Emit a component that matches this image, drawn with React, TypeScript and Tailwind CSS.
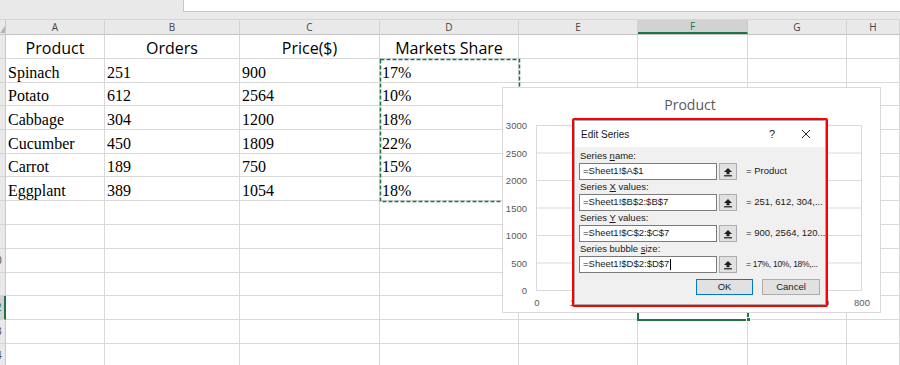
import React from 'react'

const colWidths = ['w-[99px]', 'w-[135px]', 'w-[140px]', 'w-[139px]', 'w-[119px]', 'w-[110px]', 'w-[99px]', 'flex-1']
const colLetters = ['A', 'B', 'C', 'D', 'E', 'F', 'G', 'H']
const rowHeights = [24, 24, 23, 24, 24, 23, 24, 24, 24, 24, 23, 24, 24, 23]

const data: string[][] = [
  ['Product', 'Orders', 'Price($)', 'Markets Share'],
  ['Spinach', '251', '900', '17%'],
  ['Potato', '612', '2564', '10%'],
  ['Cabbage', '304', '1200', '18%'],
  ['Cucumber', '450', '1809', '22%'],
  ['Carrot', '189', '750', '15%'],
  ['Eggplant', '389', '1054', '18%'],
]

const fields = [
  { pre: 'Series ', u: 'n', post: 'ame:', value: '=Sheet1!$A$1', preview: '= Product', tight: false },
  { pre: 'Series ', u: 'X', post: ' values:', value: '=Sheet1!$B$2:$B$7', preview: '= 251, 612, 304,...', tight: false },
  { pre: 'Series ', u: 'Y', post: ' values:', value: '=Sheet1!$C$2:$C$7', preview: '= 900, 2564, 120...', tight: false },
  { pre: 'Series bubble ', u: 's', post: 'ize:', value: '=Sheet1!$D$2:$D$7', preview: '= 17%, 10%, 18%,...', tight: true, cursor: true },
]

function UploadIcon() {
  return (
    <svg width="10" height="10" viewBox="0 0 10 10">
      <path d="M5 1 L9 5 H6.5 V7.2 H3.5 V5 H1 Z" fill="#1f1f1f" />
      <rect x="1" y="8.2" width="8" height="1.2" fill="#1f1f1f" />
    </svg>
  )
}

function Chart() {
  const yLabels = ['3000', '2500', '2000', '1500', '1000', '500', '0']
  const xLabels = ['0', '100', '200', '300', '400', '500', '600', '700', '800']
  return (
    <div className="absolute left-[502px] top-[87px] w-[379px] h-[226px] bg-white border border-[#d9d9d9] z-10">
      <svg width="377" height="224" className="block">
        <text x="187" y="22" textAnchor="middle" fontSize="14" fill="#595959" fontFamily="'Open Sans', sans-serif">
          Product
        </text>
        {yLabels.map((l, i) => (
          <g key={l}>
            <line x1="33" x2="358" y1={37.5 + i * 27.5} y2={37.5 + i * 27.5} stroke="#d9d9d9" strokeWidth="1" />
            <text x="24" y={41 + i * 27.5} textAnchor="end" fontSize="9.5" fill="#595959" fontFamily="'Liberation Sans', sans-serif">
              {l}
            </text>
          </g>
        ))}
        {xLabels.map((l, i) => (
          <g key={l}>
            <line x1={33.5 + i * 40.625} x2={33.5 + i * 40.625} y1="37.5" y2="202.5" stroke="#d9d9d9" strokeWidth="1" />
            <text x={34 + i * 40.625} y="218" textAnchor="middle" fontSize="9.5" fill="#595959" fontFamily="'Liberation Sans', sans-serif">
              {l}
            </text>
          </g>
        ))}
      </svg>
    </div>
  )
}

function EditSeriesDialog() {
  return (
    <div className="absolute left-[572px] top-[118px] w-[256px] h-[189px] border-2 border-[#ff0000] rounded-[2px] z-20 bg-white">
      <div className="h-full flex flex-col border border-[#a8a8a8] font-['Liberation_Sans',sans-serif] text-[9.5px] text-[#1a1a1a]">
        {/* Title bar */}
        <div className="h-[26px] bg-white flex items-center pl-[6px] pr-[14px]">
          <span className="text-[10px]">Edit Series</span>
          <span className="ml-auto text-[11px] mr-[26px]">?</span>
          <svg width="10" height="10" viewBox="0 0 10 10">
            <path d="M1 1 L9 9 M9 1 L1 9" stroke="#222" strokeWidth="1" />
          </svg>
        </div>

        {/* Body */}
        <div className="flex-1 bg-[#f0f0f0] pl-[4px] pr-[5px] pt-[2px] flex flex-col">
          {fields.map((f) => (
            <div key={f.value} className="flex flex-col">
              <div className="h-[14px] leading-[14px] pl-[1px] whitespace-pre">
                <span>{f.pre}</span>
                <span className="underline">{f.u}</span>
                <span>{f.post}</span>
              </div>
              <div className="h-[17px] flex items-center">
                <div className="w-[138px] shrink-0 h-[17px] bg-white border border-[#7a7a7a] flex items-center pl-[3px] whitespace-nowrap">
                  {f.value}
                  {f.cursor && <span className="inline-block w-px h-[11px] bg-black ml-px" />}
                </div>
                <div className="w-[18px] shrink-0 h-[17px] ml-[2px] bg-[#e1e1e1] border border-[#adadad] flex items-center justify-center">
                  <UploadIcon />
                </div>
                <span className={`ml-[9px] whitespace-nowrap ${f.tight ? 'text-[8.5px] tracking-[-0.3px]' : ''}`}>
                  {f.preview}
                </span>
              </div>
            </div>
          ))}
          <div className="flex justify-end gap-[9px] mt-[6px]">
            <div className="w-[57px] h-[16px] bg-[#e1e1e1] border border-[#0078d7] flex items-center justify-center">
              OK
            </div>
            <div className="w-[58px] h-[16px] bg-[#e1e1e1] border border-[#adadad] flex items-center justify-center">
              Cancel
            </div>
          </div>
        </div>
      </div>
    </div>
  )
}

export default function App() {
  return (
    <div className="relative w-[900px] h-[365px] overflow-hidden bg-white font-['Open_Sans',sans-serif]">
      {/* Formula bar strip */}
      <div className="h-[20px] bg-[#e9e9e9] flex border-b border-[#d4d4d4]">
        <div className="w-[183px]" />
        <div className="flex-1 h-[12px] bg-white border-l border-b border-[#c8c8c8]" />
      </div>

      {/* Column headers */}
      <div className="h-[15px] flex bg-[#e9e9e9] border-b border-[#c3c3c3]">
        <div className="w-[6px] flex items-end justify-end border-r border-[#c8c8c8]">
          <svg width="5" height="8" viewBox="0 0 5 8">
            <path d="M5 0 L5 7 L0 7 Z" fill="#b5b5b5" />
          </svg>
        </div>
        {colLetters.map((c, i) =>
          c === 'F' ? (
            <div
              key={c}
              className={`${colWidths[i]} bg-[#d2d2d2] border-r border-[#c8c8c8] border-b-2 border-b-[#217346] flex items-center justify-center text-[10px] text-[#217346]`}
            >
              {c}
            </div>
          ) : (
            <div
              key={c}
              className={`${colWidths[i]} border-r border-[#d4d4d4] flex items-center justify-center text-[10px] text-[#444]`}
            >
              {c}
            </div>
          )
        )}
      </div>

      {/* Rows */}
      {rowHeights.map((h, r) => (
        <div key={r} className={`${h === 24 ? 'h-[24px]' : 'h-[23px]'} flex`}>
          <div
            className={`w-[6px] overflow-hidden border-b border-[#d4d4d4] ${
              r === 11 ? 'bg-[#d2d2d2] border-r-2 border-r-[#217346] text-[#217346]' : 'bg-[#e9e9e9] border-r border-r-[#c8c8c8] text-[#444]'
            }`}
          >
            {r >= 9 && (
              <div className="w-[20px] ml-[-14px] h-full flex items-center justify-center text-[10px]">{r + 1}</div>
            )}
          </div>
          {colWidths.map((w, c) => {
            const text = data[r]?.[c] ?? ''
            return r === 0 ? (
              <div key={c} className={`${w} border-r border-b border-[#d9d9d9] flex items-end justify-center text-[16px] leading-[20px] text-black`}>
                {text}
              </div>
            ) : (
              <div
                key={c}
                className={`${w} border-r border-b border-[#d9d9d9] flex items-end pl-[2px] font-['Liberation_Serif',serif] text-[16px] leading-[18px] text-black`}
              >
                {text}
              </div>
            )
          })}
        </div>
      ))}

      {/* Copy marquee around D2:D7 */}
      <svg className="absolute left-[379px] top-[58px]" width="142" height="145">
        <rect x="1.5" y="1.5" width="139" height="142" fill="none" stroke="#217346" strokeWidth="1.5" strokeDasharray="4 2" />
      </svg>

      {/* Selected cell F12 */}
      <div className="absolute left-[637px] top-[295px] w-[112px] h-[26px] border-2 border-[#217346]" />
      <div className="absolute left-[746px] top-[317px] w-[5px] h-[5px] bg-[#217346] border border-white" />

      <Chart />
      <EditSeriesDialog />
    </div>
  )
}
